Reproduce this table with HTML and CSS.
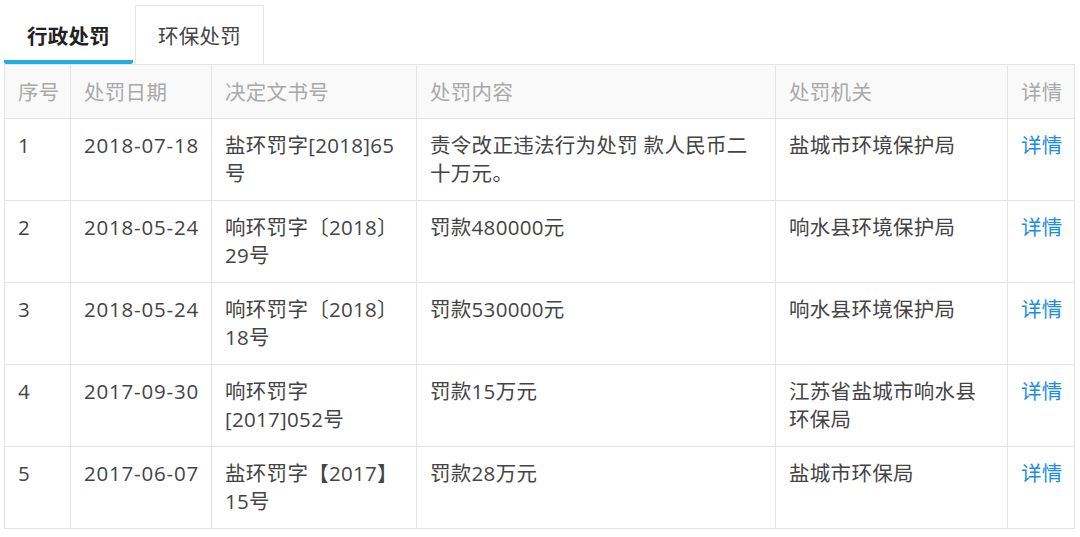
FILE: index.html
```html
<!DOCTYPE html>
<html lang="zh">
<head>
<meta charset="utf-8">
<link rel="stylesheet" href="styles.css">
</head>
<body>
<div class="page">
  <div class="tabs">
    <div class="tab active">行政处罚</div>
    <div class="tab">环保处罚</div>
  </div>
  <table class="grid">
    <colgroup>
      <col class="c1"><col class="c2"><col class="c3"><col class="c4"><col class="c5"><col class="c6">
    </colgroup>
    <thead>
      <tr><th>序号</th><th>处罚日期</th><th>决定文书号</th><th>处罚内容</th><th>处罚机关</th><th>详情</th></tr>
    </thead>
    <tbody>
      <tr><td>1</td><td class="num">2018-07-18</td><td>盐环罚字[2018]65号</td><td>责令改正违法行为处罚 款人民币二十万元。</td><td>盐城市环境保护局</td><td><a class="link">详情</a></td></tr>
      <tr><td>2</td><td class="num">2018-05-24</td><td>响环罚字〔2018〕29号</td><td>罚款480000元</td><td>响水县环境保护局</td><td><a class="link">详情</a></td></tr>
      <tr><td>3</td><td class="num">2018-05-24</td><td>响环罚字〔2018〕18号</td><td>罚款530000元</td><td>响水县环境保护局</td><td><a class="link">详情</a></td></tr>
      <tr><td>4</td><td class="num">2017-09-30</td><td>响环罚字<br>[2017]052号</td><td>罚款15万元</td><td>江苏省盐城市响水县环保局</td><td><a class="link">详情</a></td></tr>
      <tr><td>5</td><td class="num">2017-06-07</td><td>盐环罚字【2017】15号</td><td>罚款28万元</td><td>盐城市环保局</td><td><a class="link">详情</a></td></tr>
    </tbody>
  </table>
</div>
</body>
</html>
```
FILE: styles.css
```css
html, body {
  margin: 0;
  padding: 0;
  background: #fff;
}
.page {
  padding: 5px 0 0 4px;
  width: 1070px;
  font-family: "Open Sans", "Noto Sans CJK SC", sans-serif;
  font-size: 20.5px;
  letter-spacing: 0.3px;
  color: #333;
}
.tabs {
  display: flex;
  height: 59px;
}
.tab {
  width: 129px;
  box-sizing: border-box;
  display: flex;
  align-items: center;
  justify-content: center;
  color: #444;
}
.tab + .tab {
  margin-left: 2px;
  border: 1px solid #e6e6e6;
  border-bottom: none;
}
.tab.active {
  font-weight: bold;
  color: #222;
  border-bottom: 4px solid #1fb0de;
  padding-top: 4px;
  border-radius: 0 0 2px 2px;
}
.grid {
  border-collapse: collapse;
  table-layout: fixed;
  width: 1070px;
}
.c1 { width: 66px; }
.c2 { width: 141px; }
.c3 { width: 205px; }
.c4 { width: 359px; }
.c5 { width: 232px; }
.c6 { width: 67px; }
.grid th, .grid td {
  border: 1px solid #e4e4e4;
  text-align: left;
  vertical-align: top;
  padding: 12px 14px 0 13px;
  line-height: 28px;
}
.grid th:first-child, .grid td:first-child,
.grid th:last-child, .grid td:last-child,
.grid td.num {
  white-space: nowrap;
  overflow: hidden;
  padding-right: 0;
}
.grid th {
  height: 54px;
  box-sizing: border-box;
  vertical-align: middle;
  padding-top: 0;
  font-weight: normal;
  color: #a9a9a9;
  background: #f9f9f9;
}
.grid td {
  height: 82px;
  box-sizing: border-box;
  color: #444;
}
.grid td.num {
  letter-spacing: 0.8px;
}
.link {
  color: #1a8ce8;
}
```
